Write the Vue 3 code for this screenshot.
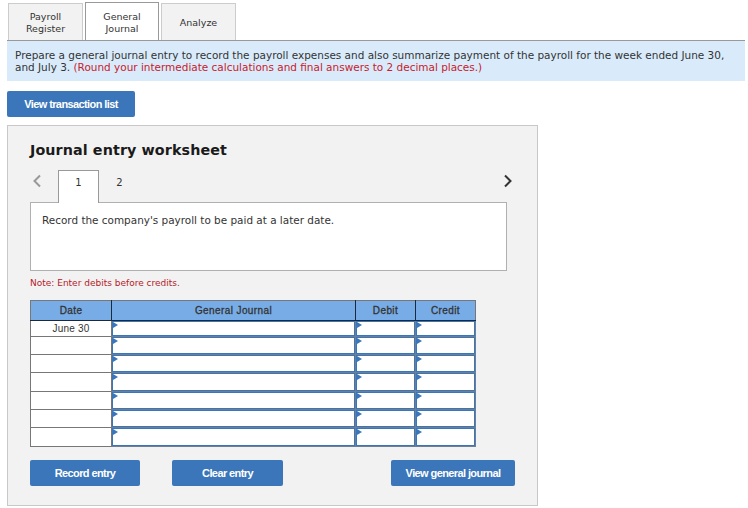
<template>
  <div class="page">
    <!-- Top tabs -->
    <div class="tabs">
      <div v-for="tab in tabs" :key="tab.label" class="tab" :class="{ active: tab.active }">
        {{ tab.label }}
      </div>
    </div>

    <div class="prompt">
      Prepare a general journal entry to record the payroll expenses and also summarize payment of the payroll for the week ended June 30, and July 3.
      <span class="red">(Round your intermediate calculations and final answers to 2 decimal places.)</span>
    </div>

    <button class="btn list-btn">View transaction list</button>

    <!-- Worksheet -->
    <div class="panel">
      <h2 class="title">Journal entry worksheet</h2>

      <div class="pager">
        <svg class="chevron" width="10" height="14" viewBox="0 0 10 14">
          <path d="M8 1.5 L2.5 7 L8 12.5" fill="none" stroke="#999" stroke-width="2" />
        </svg>
        <div class="page-tab active">1</div>
        <div class="page-tab">2</div>
        <svg class="chevron next" width="10" height="14" viewBox="0 0 10 14">
          <path d="M2 1.5 L7.5 7 L2 12.5" fill="none" stroke="#333" stroke-width="2" />
        </svg>
      </div>

      <div class="desc">Record the company's payroll to be paid at a later date.</div>

      <p class="note">Note: Enter debits before credits.</p>

      <table class="journal">
        <thead>
          <tr>
            <th class="col-date">Date</th>
            <th class="col-gj">General Journal</th>
            <th class="col-debit">Debit</th>
            <th class="col-credit">Credit</th>
          </tr>
        </thead>
        <tbody>
          <tr v-for="(row, i) in rows" :key="i" :style="{ height: row.h + 'px' }">
            <td class="date">{{ row.date }}</td>
            <td class="entry"></td>
            <td class="entry"></td>
            <td class="entry"></td>
          </tr>
        </tbody>
      </table>

      <div class="actions">
        <button class="btn record">Record entry</button>
        <button class="btn clear">Clear entry</button>
        <button class="btn view">View general journal</button>
      </div>
    </div>
  </div>
</template>

<script setup>
const tabs = [
  { label: 'Payroll Register', active: false },
  { label: 'General Journal', active: true },
  { label: 'Analyze', active: false }
]

const rows = [
  { date: 'June 30', h: 16 },
  { date: '', h: 18 },
  { date: '', h: 18 },
  { date: '', h: 19 },
  { date: '', h: 18 },
  { date: '', h: 18 },
  { date: '', h: 19 }
]
</script>

<style>
html, body {
  margin: 0;
  background: #fff;
}
</style>

<style scoped>
.page {
  width: 748px;
  height: 508px;
  overflow: hidden;
  box-sizing: border-box;
  padding: 3px 3px 0 7px;
  font-family: "DejaVu Sans", Verdana, sans-serif;
  font-size: 10px;
  color: #333;
}

.tabs {
  display: flex;
  gap: 2px;
  padding-left: 1px;
  height: 37px;
  border-bottom: 1px solid #999;
}

.tab {
  width: 75px;
  height: 37px;
  box-sizing: border-box;
  display: flex;
  align-items: center;
  justify-content: center;
  text-align: center;
  line-height: 12px;
  padding: 1px 10px 0;
  font-size: 9.5px;
  background: #f2f2f2;
  border: 1px solid #ccc;
  border-bottom: none;
}

.tab.active {
  width: 74px;
  height: 38px;
  position: relative;
  background: #fff;
  border-color: #999;
  margin-top: -1px;
  padding-top: 2px;
}

.prompt {
  box-sizing: border-box;
  height: 40px;
  padding: 8px 8px 0;
  line-height: 12px;
  background: #d9ebfa;
  font-size: 10.47px;
}

.red {
  color: #c8202b;
}

.btn {
  display: block;
  height: 26px;
  padding: 0;
  border: none;
  border-radius: 2px;
  background: #3a76b9;
  color: #fff;
  font-family: "Liberation Sans", Arial, sans-serif;
  font-size: 11px;
  font-weight: bold;
  letter-spacing: -0.6px;
}

.list-btn {
  width: 128px;
  margin-top: 10px;
}

.panel {
  box-sizing: border-box;
  width: 531px;
  height: 381px;
  margin-top: 8px;
  padding: 0 22px;
  background: #f2f2f2;
  border: 1px solid #c8c8c8;
}

.title {
  margin: 15px 0 0;
  font-size: 14.3px;
  line-height: 18px;
  font-weight: bold;
  color: #1a1a1a;
  letter-spacing: 0.1px;
}

.pager {
  display: flex;
  align-items: stretch;
  height: 33px;
  margin-top: 11px;
  position: relative;
  z-index: 1;
}

.chevron {
  align-self: flex-start;
  margin: 4px 0 0 2px;
}

.chevron.next {
  margin-left: auto;
  margin-right: 2px;
}

.page-tab {
  width: 41px;
  box-sizing: border-box;
  display: flex;
  align-items: center;
  justify-content: center;
  padding-bottom: 9px;
  font-size: 10px;
}

.page-tab.active {
  margin-left: 16px;
  background: #fff;
  border: 1px solid #999;
  border-bottom: none;
}

.desc {
  box-sizing: border-box;
  width: 477px;
  height: 69px;
  margin-top: -1px;
  padding: 11px 11px 0;
  background: #fff;
  border: 1px solid #b0b0b0;
  line-height: 13px;
  font-size: 10.45px;
}

.note {
  margin: 6px 0 0;
  line-height: 13px;
  font-size: 9px;
  color: #b5202a;
}

.journal {
  width: 445px;
  margin-top: 10px;
  table-layout: fixed;
  border-collapse: collapse;
  background: #fff;
  font-family: "Liberation Sans", Arial, sans-serif;
  font-size: 10px;
  border: 1px solid #777;
}

.col-date { width: 81px; }
.col-gj { width: 244px; }
.col-debit { width: 60px; }
.col-credit { width: 60px; }

th {
  box-sizing: border-box;
  height: 20px;
  padding: 0;
  background: #78ace6;
  color: #333;
  font-weight: normal;
  letter-spacing: 0.4px;
  -webkit-text-stroke: 0.3px #333;
  border-right: 1px solid #1a2a3a;
  border-bottom: 1px solid #1a2a3a;
}

th:last-child {
  border-right: none;
}

td {
  padding: 0;
  border: 1px solid #777;
}

td.date {
  text-align: center;
  letter-spacing: 0.2px;
}

td.entry {
  position: relative;
  border-color: #6f7f92;
  box-shadow: inset 0 0 0 1px #3a76b9;
}

td.entry::before {
  content: '';
  position: absolute;
  left: 1px;
  top: 1px;
  border-left: 5px solid #3a76b9;
  border-top: 3px solid transparent;
  border-bottom: 3px solid transparent;
}

.actions {
  display: flex;
  margin-top: 13px;
}

.record {
  width: 110px;
}

.clear {
  width: 111px;
  margin-left: 32px;
}

.view {
  width: 124px;
  margin-left: 108px;
}
</style>
